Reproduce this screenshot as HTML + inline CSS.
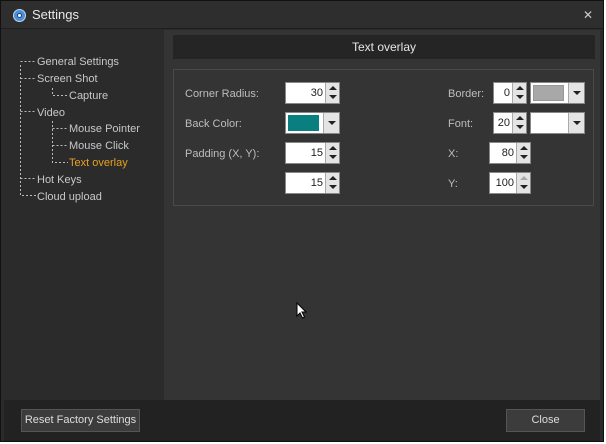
<!DOCTYPE html>
<html><head><meta charset="utf-8"><style>
*{margin:0;padding:0;box-sizing:border-box}
body{width:606px;height:444px;background:#fff;font-family:"Segoe UI","Liberation Sans",sans-serif;font-size:11px;color:#c8c8c8;position:relative;overflow:hidden}
.win{position:absolute;left:0;top:0;width:604px;height:442px;background:#2b2b2b;border:1px solid #111}
.title{position:absolute;left:0;top:0;width:602px;height:28px;background:#2e2e2e;border-bottom:1px solid #1e1e1e}
.title .t{position:absolute;left:31px;top:6px;font-size:13px;color:#e8e8e8}
.logo{position:absolute;left:12px;top:8px;width:13px;height:13px;border-radius:50%;background:#4a90d9;border:1px solid #c0d8f0}
.logo:after{content:"";position:absolute;left:3px;top:3px;width:5px;height:5px;border-radius:50%;background:#fff;border:1px solid #1b3f7a;box-sizing:border-box}
.x{position:absolute;left:582px;top:7px;font-size:12px;color:#ccc}
.side{position:absolute;left:3px;top:29px;width:160px;height:370px;background:#2b2b2b}
.main{position:absolute;left:163px;top:29px;width:436px;height:370px;background:#343434}
.foot{position:absolute;left:3px;top:399px;width:596px;height:41px;background:#222}
.tree div{position:absolute;font-size:11px;color:#c8c8c8;white-space:pre;font-family:"Liberation Sans",sans-serif}
.hdr{position:absolute;left:173px;top:35px;width:422px;height:24px;background:#252525;color:#e6e6e6;text-align:center;font-size:12px;line-height:24px}
.grp{position:absolute;left:173px;top:69px;width:421px;height:137px;border:1px solid #4a4a4a}
.lbl{position:absolute;font-size:11px;color:#bdbdbd}
.sp{position:absolute;height:22px;background:#fff;border:1px solid #888;color:#222;text-align:right;padding-right:16px;font-size:11px;line-height:20px}
.sp i{position:absolute;right:0;top:0;width:14px;height:20px;background:#e4e4e4;border-left:1px solid #aaa;font-style:normal}
.sp i:before,.sp i:after{content:"";position:absolute;left:3px;border-left:4px solid transparent;border-right:4px solid transparent}
.sp i:before{top:3px;border-bottom:4px solid #222}
.sp i:after{top:12px;border-top:4px solid #222}
.sp i.dim:before{border-bottom-color:#aaa}
.cb{position:absolute;height:22px;background:#fff;border:1px solid #888}
.cb b{position:absolute;right:0;top:0;width:16px;height:20px;background:#e4e4e4;border-left:1px solid #aaa}
.cb b:after{content:"";position:absolute;left:4px;top:8px;border-left:4px solid transparent;border-right:4px solid transparent;border-top:4px solid #222}
.cb s{position:absolute;left:2px;top:2px;bottom:2px;right:20px;border:1px solid #ccc}
.btn{position:absolute;height:23px;background:#3c3c3c;border:1px solid #555;color:#ddd;text-align:center;line-height:21px;font-size:11px}
</style></head><body>
<div class="win">
<div class="title"><div class="logo"></div><div class="t">Settings</div><div class="x">✕</div></div>
<div class="side"></div>
<div class="main"></div>
<div class="foot"></div>
</div>
<svg style="position:absolute;left:0;top:0" width="170" height="210">
<g stroke="#bbb" stroke-dasharray="2,2" fill="none" stroke-width="1">
<path d="M20.5 65 V195.5 H36"/><path d="M20.5 61.5 H36"/><path d="M20.5 78.5 H36"/><path d="M20.5 111.5 H36"/><path d="M20.5 178.5 H36"/>
<path d="M52.5 88 V95.5 H68"/>
<path d="M52.5 121 V162.5 H68"/><path d="M52.5 128.5 H68"/><path d="M52.5 145.5 H68"/>
</g></svg>
<div class="tree">
<div style="left:37px;top:56px">General Settings</div>
<div style="left:37px;top:73px">Screen Shot</div>
<div style="left:69px;top:90px">Capture</div>
<div style="left:37px;top:107px">Video</div>
<div style="left:69px;top:123px">Mouse Pointer</div>
<div style="left:69px;top:140px">Mouse Click</div>
<div style="left:69px;top:157px;color:#e8a020">Text overlay</div>
<div style="left:37px;top:174px">Hot Keys</div>
<div style="left:37px;top:191px">Cloud upload</div>
</div>
<div class="hdr">Text overlay</div>
<div class="grp"></div>
<div class="lbl" style="left:185px;top:88px">Corner Radius:</div>
<div class="lbl" style="left:185px;top:118px">Back Color:</div>
<div class="lbl" style="left:185px;top:148px">Padding (X, Y):</div>
<div class="sp" style="left:285px;top:82px;width:55px">30<i></i></div>
<div class="cb" style="left:285px;top:112px;width:55px"><s style="background:#0a7f7f;border-color:#0a7f7f"></s><b></b></div>
<div class="sp" style="left:285px;top:142px;width:55px">15<i></i></div>
<div class="sp" style="left:285px;top:172px;width:55px">15<i></i></div>
<div class="lbl" style="left:448px;top:88px">Border:</div>
<div class="lbl" style="left:448px;top:118px">Font:</div>
<div class="lbl" style="left:448px;top:148px">X:</div>
<div class="lbl" style="left:448px;top:178px">Y:</div>
<div class="sp" style="left:493px;top:82px;width:34px">0<i></i></div>
<div class="cb" style="left:530px;top:82px;width:55px"><s style="background:#a8a8a8;border-color:#999"></s><b></b></div>
<div class="sp" style="left:493px;top:112px;width:34px">20<i></i></div>
<div class="cb" style="left:530px;top:112px;width:55px"><b></b></div>
<div class="sp" style="left:489px;top:142px;width:42px">80<i></i></div>
<div class="sp" style="left:489px;top:172px;width:42px">100<i class="dim"></i></div>
<svg style="position:absolute;left:296px;top:302px" width="12" height="18"><path d="M1 1 V14 L4 11 L6.5 16 L8.5 15 L6 10 H10 Z" fill="#fff" stroke="#000" stroke-width="1"/></svg>
<div class="btn" style="left:21px;top:409px;width:119px">Reset Factory Settings</div>
<div class="btn" style="left:506px;top:409px;width:79px">Close</div>
</body></html>
